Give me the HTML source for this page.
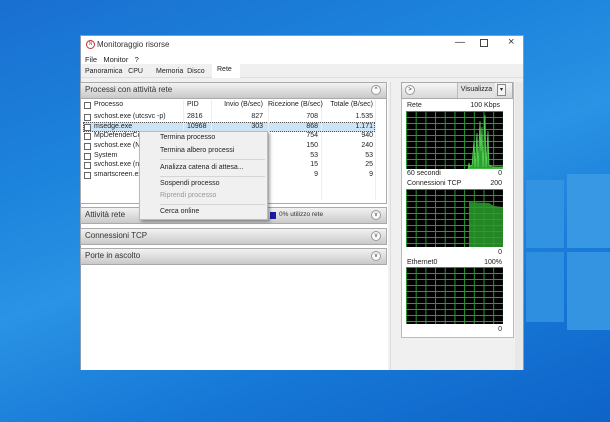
<!DOCTYPE html>
<html><head><meta charset="utf-8"><style>
*{box-sizing:border-box;margin:0;padding:0}
body{width:610px;height:422px;overflow:hidden;position:relative;font-family:"Liberation Sans",sans-serif;font-size:7px;color:#222;
background:linear-gradient(160deg,#1a6fd0 0%,#1c84dc 30%,#2a93e4 50%,#1677d6 75%,#0e63c8 100%)}
.abs{position:absolute}
.pane{position:absolute;background:#3c9de8}
.win{left:80px;top:35px;width:444px;height:335px;background:#fff;border:1px solid #8a9ab0}
.t{position:absolute;white-space:nowrap}
.hdr{position:absolute;height:16px;background:linear-gradient(#f2f2f2,#c9c9c9);border:1px solid #aaa;font-size:8px;line-height:14px;padding-left:4px;color:#333}
.chev{position:absolute;right:5px;top:2px;width:10px;height:10px;border-radius:50%;background:#fafafa;border:1px solid #999;font-size:6px;line-height:8px;text-align:center}
.cb{position:absolute;width:7px;height:7px;border:1px solid #666;background:#fff}
.r{text-align:right}
.graph{position:absolute;left:406px;width:97px;background-color:#000;
background-image:linear-gradient(#2a9a35 1px,transparent 1px),linear-gradient(90deg,#2a9a35 1px,transparent 1px);background-size:9.7px 6px}
.menu{left:139px;top:131px;width:129px;height:89px;background:#f0f0f0;border:1px solid #bbb;box-shadow:2px 2px 3px rgba(0,0,0,.35)}
.menu .t{left:20px;font-size:7px}
.sep{position:absolute;left:20px;right:2px;height:1px;background:#d5d5d5}
</style></head><body>
<div class="pane" style="left:526px;top:180px;width:38px;height:68px;background:#3293e2"></div>
<div class="pane" style="left:567px;top:174px;width:43px;height:74px;background:#3898e4"></div>
<div class="pane" style="left:526px;top:252px;width:38px;height:70px;background:#2e8fe0"></div>
<div class="pane" style="left:567px;top:252px;width:43px;height:78px;background:#3494e2"></div>

<div class="abs win">
 <div class="t" style="left:5px;top:4px;width:9px;height:9px;border:1px solid #b33;border-radius:50%;font-size:5px;text-align:center;line-height:7px;color:#b33">N</div>
 <div class="t" style="left:16px;top:4px;font-size:8px;color:#333">Monitoraggio risorse</div>
 <div class="t" style="left:374px;top:1px;font-size:10px;color:#333">—</div>
 <div class="t" style="left:399px;top:3px;width:8px;height:8px;border:1px solid #444"></div>
 <div class="t" style="left:427px;top:0px;font-size:11px;color:#333">×</div>
 <div class="t" style="left:4px;top:19px;font-size:7.5px">File&nbsp;&nbsp;&nbsp;Monitor&nbsp;&nbsp;&nbsp;?</div>
 <div class="abs" style="left:0;top:28px;width:442px;height:14px;background:#f0f0f0;border-bottom:1px solid #ddd"></div>
 <div class="t" style="left:4px;top:32px;font-size:7px">Panoramica&nbsp;&nbsp;&nbsp;CPU</div>
 <div class="t" style="left:75px;top:32px;font-size:7px">Memoria&nbsp;&nbsp;Disco</div>
 <div class="abs" style="left:131px;top:28px;width:28px;height:15px;background:#fff"></div>
 <div class="t" style="left:136px;top:30px;font-size:7px">Rete</div>
 <div class="abs" style="left:0;top:42px;width:442px;height:292px;background:#f0f0f0"></div>
 <div class="abs" style="left:0;top:46px;width:307px;height:288px;background:#fff"></div>
 <div class="abs" style="left:309px;top:46px;width:8px;height:288px;background:#f0f0f0;border-left:1px solid #ddd"></div>
 <div class="abs" style="left:320px;top:46px;width:113px;height:256px;background:#fff;border:1px solid #bbb"></div>
 <div class="abs" style="left:434px;top:46px;width:8px;height:288px;background:#e8e8e8"></div>
</div>

<div class="hdr" style="left:80px;top:82px;width:307px;height:17px">Processi con attività rete<div class="chev">^</div></div>
<div class="abs" style="left:80px;top:99px;width:307px;height:105px;border:1px solid #aaa;border-top:none;background:#fff"></div>
<div class="abs" style="left:83px;top:122px;width:292px;height:10px;background:#cce4f7;border:1px dotted #555"></div>
<div class="abs" style="left:183px;top:100px;width:1px;height:100px;background:#eee"></div>
<div class="abs" style="left:211px;top:100px;width:1px;height:100px;background:#eee"></div>
<div class="abs" style="left:268px;top:100px;width:1px;height:100px;background:#eee"></div>
<div class="abs" style="left:321px;top:100px;width:1px;height:100px;background:#eee"></div>
<div class="abs" style="left:375px;top:100px;width:1px;height:100px;background:#eee"></div>
<div style="position:absolute;left:0;top:0">
 <div class="cb" style="left:84px;top:102px"></div><div class="t" style="left:94px;top:101px">Processo</div>
 <div class="t" style="left:187px;top:101px">PID</div>
 <div class="t r" style="left:213px;top:101px;width:50px">Invio (B/sec)</div>
 <div class="t r" style="left:268px;top:101px;width:50px">Ricezione (B/sec)</div>
 <div class="t r" style="left:323px;top:101px;width:50px">Totale (B/sec)</div>
</div>
<div style="position:absolute;left:0;top:113px">
 <div class="cb" style="left:84px;top:1px"></div><div class="t" style="left:94px;top:0">svchost.exe (utcsvc -p)</div><div class="t" style="left:187px;top:0">2816</div><div class="t r" style="left:213px;width:50px;top:0">827</div><div class="t r" style="left:268px;width:50px;top:0">708</div><div class="t r" style="left:323px;width:50px;top:0">1.535</div>
</div>
<div style="position:absolute;left:0;top:123px">
 <div class="cb" style="left:84px;top:1px"></div><div class="t" style="left:94px;top:0">msedge.exe</div><div class="t" style="left:187px;top:0">10968</div><div class="t r" style="left:213px;width:50px;top:0">303</div><div class="t r" style="left:268px;width:50px;top:0">868</div><div class="t r" style="left:323px;width:50px;top:0">1.171</div>
</div>
<div style="position:absolute;left:0;top:132px"><div class="cb" style="left:84px;top:1px"></div><div class="t" style="left:94px;top:0">MpDefenderCo</div><div class="t r" style="left:268px;width:50px;top:0">754</div><div class="t r" style="left:323px;width:50px;top:0">940</div></div>
<div style="position:absolute;left:0;top:142px"><div class="cb" style="left:84px;top:1px"></div><div class="t" style="left:94px;top:0">svchost.exe (Ne</div><div class="t r" style="left:268px;width:50px;top:0">150</div><div class="t r" style="left:323px;width:50px;top:0">240</div></div>
<div style="position:absolute;left:0;top:152px"><div class="cb" style="left:84px;top:1px"></div><div class="t" style="left:94px;top:0">System</div><div class="t r" style="left:268px;width:50px;top:0">53</div><div class="t r" style="left:323px;width:50px;top:0">53</div></div>
<div style="position:absolute;left:0;top:161px"><div class="cb" style="left:84px;top:1px"></div><div class="t" style="left:94px;top:0">svchost.exe (net</div><div class="t r" style="left:268px;width:50px;top:0">15</div><div class="t r" style="left:323px;width:50px;top:0">25</div></div>
<div style="position:absolute;left:0;top:171px"><div class="cb" style="left:84px;top:1px"></div><div class="t" style="left:94px;top:0">smartscreen.exe</div><div class="t r" style="left:268px;width:50px;top:0">9</div><div class="t r" style="left:323px;width:50px;top:0">9</div></div>

<div class="hdr" style="left:80px;top:207px;width:307px;height:17px">Attività rete<div class="chev">v</div></div>
<div class="abs" style="left:270px;top:212px;width:6px;height:7px;background:#1a1aa0"></div>
<div class="t" style="left:279px;top:211px;font-size:6.5px;color:#333">0% utilizzo rete</div>
<div class="hdr" style="left:80px;top:228px;width:307px;height:17px">Connessioni TCP<div class="chev">v</div></div>
<div class="hdr" style="left:80px;top:248px;width:307px;height:17px">Porte in ascolto<div class="chev">v</div></div>

<div class="abs menu">
 <div class="t" style="top:2px">Termina processo</div>
 <div class="t" style="top:15px">Termina albero processi</div>
 <div class="sep" style="top:27px"></div>
 <div class="t" style="top:32px">Analizza catena di attesa...</div>
 <div class="sep" style="top:44px"></div>
 <div class="t" style="top:48px">Sospendi processo</div>
 <div class="t" style="top:60px;color:#999">Riprendi processo</div>
 <div class="sep" style="top:72px"></div>
 <div class="t" style="top:76px">Cerca online</div>
</div>

<div class="abs" style="left:401px;top:82px;width:112px;height:17px;background:linear-gradient(#f6f6f6,#d8d8d8);border:1px solid #aaa"></div>
<div class="abs" style="left:405px;top:85px;width:10px;height:10px;border-radius:50%;background:#fafafa;border:1px solid #999;font-size:6px;text-align:center;line-height:8px">&gt;</div>
<div class="abs" style="left:457px;top:83px;width:38px;height:15px;background:#e2e2e2;border-left:1px solid #bbb;font-size:7px;line-height:14px;text-align:center">Visualizza</div>
<div class="abs" style="left:497px;top:84px;width:9px;height:12px;border:1px solid #888;background:#f4f4f4;font-size:6px;text-align:center;line-height:10px">▾</div>
<div class="t" style="left:407px;top:102px">Rete</div><div class="t r" style="left:460px;top:102px;width:40px">100 Kbps</div>
<div class="graph" style="top:111px;height:58px">
<svg width="97" height="58" style="position:absolute;left:0;top:0"><path d="M62 58 L63 52 L64 56 L66 54 L68 30 L69 56 L71 22 L72 56 L74 10 L75 40 L76 16 L77 56 L79 4 L80 56 L82 20 L83 54 L86 56 L97 56 L97 58Z" fill="#2f9f2f" stroke="#5fe05f" stroke-width="0.7"/></svg></div>
<div class="t" style="left:407px;top:170px">60 secondi</div><div class="t r" style="left:470px;top:170px;width:32px">0</div>
<div class="t" style="left:407px;top:180px">Connessioni TCP</div><div class="t r" style="left:470px;top:180px;width:32px">200</div>
<div class="graph" style="top:189px;height:58px">
<svg width="97" height="58" style="position:absolute;left:0;top:0"><path d="M63 58 L63 13 L83 14 L88 17 L97 18 L97 58Z" fill="#2a9e2a" fill-opacity=".85"/></svg></div>
<div class="t r" style="left:470px;top:249px;width:32px">0</div>
<div class="t" style="left:407px;top:259px">Ethernet0</div><div class="t r" style="left:470px;top:259px;width:32px">100%</div>
<div class="graph" style="top:267px;height:57px"></div>
<div class="t r" style="left:470px;top:326px;width:32px">0</div>
</body></html>
